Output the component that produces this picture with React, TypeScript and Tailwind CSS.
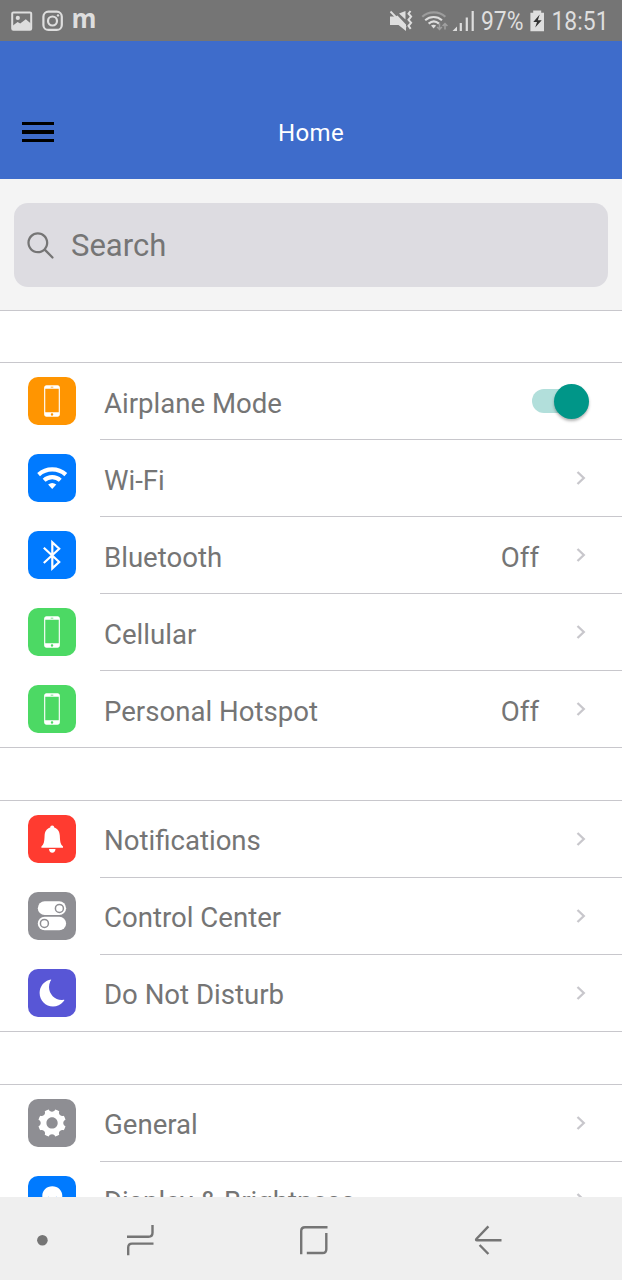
import React from "react";
import {
  IoIosMoon,
  IoIosPhonePortrait,
  IoIosSearch,
  IoIosSettings,
} from "react-icons/io";

type IconProps = { size?: number; className?: string };

type Item = {
  label: string;
  icon: React.ComponentType<IconProps>;
  tile: string;
  value?: string;
  toggle?: boolean;
};

function WifiIcon({ className }: IconProps) {
  return (
    <svg className={className} width="48" height="48" viewBox="0 0 48 48" fill="none" stroke="currentColor">
      <path d="M10.6 20.6a20.500 20.500 0 0 1 27.200 0" strokeWidth="4.200" />
      <path d="M16.100 26.200a12 12 0 0 1 16.200 0" strokeWidth="4.200" />
      <path d="M20.100 30.600q4.100-3 8.200 0L24.200 35z" fill="currentColor" stroke="none" />
    </svg>
  );
}

function BluetoothIcon({ className }: IconProps) {
  return (
    <svg className={className} width="48" height="48" viewBox="0 0 48 48" fill="none" stroke="currentColor" strokeWidth="2.200">
      <path d="M15.800 16.800L31.200 31 24.300 37.400V11.300L31.200 17.800 15.800 32" />
    </svg>
  );
}

function BellIcon({ className }: IconProps) {
  return (
    <svg className={className} width="48" height="48" viewBox="0 0 48 48" fill="currentColor">
      <path d="M24.200 10.400c1.300 0 1.900.8 2 2 3.600 1 5.400 4.200 5.600 8.200.3 6.200.5 8.600 3.200 11v1.200H13.400v-1.200c2.700-2.400 2.900-4.800 3.200-11 .2-4 2-7.200 5.600-8.200.1-1.200.7-2 2-2z" />
      <path d="M21 34.100h6.500c-.1 2.300-1.400 3.700-3.250 3.700S21.100 36.400 21 34.100z" />
    </svg>
  );
}

function SwitchesIcon({ className }: IconProps) {
  return (
    <svg className={className} width="48" height="48" viewBox="0 0 48 48" fill="currentColor">
      <rect x="9.800" y="9.300" width="28.300" height="13.800" rx="6.900" />
      <rect x="9.800" y="24.700" width="28.300" height="13.600" rx="6.800" />
      <circle cx="31.400" cy="16.400" r="4" fill="none" stroke="#8e8e93" strokeWidth="1.500" />
      <circle cx="16.400" cy="31.400" r="4" fill="none" stroke="#8e8e93" strokeWidth="1.500" />
    </svg>
  );
}

function BulbIcon({ className }: IconProps) {
  return (
    <svg className={className} width="48" height="48" viewBox="0 0 48 48" fill="currentColor">
      <path d="M24.300 10.200c-5.700 0-10 4.200-10 9.500 0 5.300 3.400 6.800 4.800 12h10.400c1.400-5.200 4.800-6.700 4.800-12 0-5.300-4.300-9.500-10-9.500zM20 33.500h8.600v4H20z" />
      <path d="M20 20.500l2.200 1.500 2.100-1 2.100 1 2.200-1.500-2.600 10h-3.400z" fill="#007aff" />
    </svg>
  );
}

const groups: Item[][] = [
  [
    { label: "Airplane Mode", icon: IoIosPhonePortrait, tile: "bg-[#ff9501]", toggle: true },
    { label: "Wi-Fi", icon: WifiIcon, tile: "bg-[#007aff]" },
    { label: "Bluetooth", icon: BluetoothIcon, tile: "bg-[#007aff]", value: "Off" },
    { label: "Cellular", icon: IoIosPhonePortrait, tile: "bg-[#4cd964]" },
    { label: "Personal Hotspot", icon: IoIosPhonePortrait, tile: "bg-[#4cd964]", value: "Off" },
  ],
  [
    { label: "Notifications", icon: BellIcon, tile: "bg-[#ff3b30]" },
    { label: "Control Center", icon: SwitchesIcon, tile: "bg-[#8e8e93]" },
    { label: "Do Not Disturb", icon: IoIosMoon, tile: "bg-[#5856d6]" },
  ],
  [
    { label: "General", icon: IoIosSettings, tile: "bg-[#8e8e93]" },
    { label: "Display & Brightness", icon: BulbIcon, tile: "bg-[#007aff]" },
  ],
];

function StatusBar() {
  return (
    <div className="flex h-[41px] shrink-0 items-center bg-[#757575] text-[#dedede]">
      <svg width="100" height="41" viewBox="0 0 100 41" fill="none">
        <rect x="12.2" y="12.4" width="19" height="17.4" rx="1.2" stroke="currentColor" strokeWidth="2" />
        <circle cx="17.8" cy="17.9" r="2.1" fill="currentColor" />
        <path d="M13 25.5l4.6-3.4 2.6 1.5 5.6-4.3 5 4.3v6H13z" fill="currentColor" />
        <rect x="43.4" y="11.7" width="18.4" height="18.2" rx="5" stroke="currentColor" strokeWidth="2.2" />
        <circle cx="52.5" cy="21" r="4.5" stroke="currentColor" strokeWidth="2.2" />
        <circle cx="58" cy="15.4" r="1.2" fill="currentColor" />
        <text x="71.5" y="28.4" fill="currentColor" fontFamily="Open Sans" fontWeight="700" fontSize="27" textLength="25" lengthAdjust="spacingAndGlyphs">m</text>
      </svg>
      <svg className="ml-auto" width="234" height="41" viewBox="388 0 234 41" fill="none">
        <path d="M390 16.5h5.5l2-1 8.5 9v6.5l-7.5-6H390zM399 13.5l6.5-2.5v8.6z" fill="currentColor" />
        <path d="M390.5 11.5l15.5 16" stroke="currentColor" strokeWidth="1.8" />
        <path d="M410.5 11l-2 2.6 2.6 3-2.6 3.2 2.6 3-2.6 3 2.2 3" stroke="currentColor" strokeWidth="2" />
        <path d="M422.3 16.8c6-6 17-6 23 0" stroke="#9c9c9c" strokeWidth="2.2" />
        <path d="M425.2 20.2c5-4.2 11.8-4.2 16.8 0M428.6 23.6c3.3-2.8 7.2-2.8 10.4 0" stroke="currentColor" strokeWidth="2.1" />
        <path d="M431 25.5q2.6-1.6 5.2 0l-2.6 3z" fill="currentColor" />
        <path d="M439.5 23.5v6m-2.4-2.5 2.4 2.5 2.4-2.5M445 29.5v-6m-2.4 2.5 2.4-2.5 2.4 2.5" stroke="#a0a0a0" strokeWidth="1.5" />
        <path d="M452.5 31l4.5-4.5V31z" fill="currentColor" />
        <path d="M460.8 31v-8M466.8 31V17.5M472.7 31V11" stroke="currentColor" strokeWidth="2.2" />
        <text x="481" y="30.2" fill="currentColor" fontFamily="Roboto" fontSize="26" textLength="42.5" lengthAdjust="spacingAndGlyphs">97%</text>
        <path d="M533.2 10.5h8v2.2h2.8v18.6h-13.6V12.7h2.8z" fill="currentColor" />
        <path d="M539.7 14.5l-6.4 7.6h3.7l-1.8 5.5 6.5-7.4h-3.9z" fill="#333333" />
        <text x="551.5" y="30.2" fill="currentColor" fontFamily="Roboto" fontSize="26" textLength="57" lengthAdjust="spacingAndGlyphs">18:51</text>
      </svg>
    </div>
  );
}

function Toggle() {
  return (
    <div className="relative mr-[34px] h-6 w-14 rounded-full">
      <div className="h-6 w-11 rounded-full bg-[#b2dfdb]" />
      <div className="absolute -top-[5px] -right-[0.5px] size-[34.5px] rounded-full bg-[#009688] shadow-[0_2px_3px_rgba(0,0,0,0.3)]" />
    </div>
  );
}

function Row({ item, last, textPad }: { item: Item; last: boolean; textPad: string }) {
  const Icon = item.icon;
  return (
    <div className={`flex h-[77px] pl-[27.6px] ${last ? "shadow-[inset_0_-1px_0_#c8c7cc]" : ""}`}>
      <div className={`mt-[13.8px] flex size-[48.4px] shrink-0 items-center justify-center rounded-[10px] text-white ${item.tile}`}>
        <Icon size={36} className="shrink-0" />
      </div>
      <div className="ml-6 flex grow items-center border-b border-[#c8c7cc] pl-1 text-[27.6px]">
        <span className={`grow whitespace-nowrap ${textPad}`}>{item.label}</span>
        {item.value && <span className={`mr-9 ${textPad}`}>{item.value}</span>}
        {item.toggle ? (
          <Toggle />
        ) : (
          <svg className="mr-[35px] shrink-0" width="12" height="16" viewBox="0 0 12 16" fill="none">
            <path d="M2.500 2L8.800 8l-6.300 6" stroke="#c8c7cc" strokeWidth="2.300" />
          </svg>
        )}
      </div>
    </div>
  );
}

function NavBar() {
  return (
    <div className="flex h-[83px] shrink-0 bg-[#efefef]">
      <svg width="622" height="83" viewBox="0 1197 622 83" fill="none" stroke="#757575" strokeWidth="2.4">
        <circle cx="42.4" cy="1240.2" r="5.3" fill="#757575" stroke="none" />
        <path d="M127 1236.700h21.500q4 0 4-4v-7.700M153.500 1243.600H132q-3.800 0-3.800 4v7.700" />
        <path d="M327.500 1227.200H305q-3.800 0-3.800 3.800v23.300M306.800 1253h15.700q3.800 0 3.800-3.800V1233" />
        <path d="M501.500 1240.300H477q-1.500 0-.6-1.300l12-12.600M479.600 1245l8.800 9" />
      </svg>
    </div>
  );
}

export default function App() {
  return (
    <div className="flex h-[1280px] w-[622px] flex-col overflow-hidden bg-white font-[Roboto,sans-serif] text-[#757575]">
      <StatusBar />
      <header className="grid h-[138px] shrink-0 grid-cols-[1fr_auto_1fr] items-center bg-[#3e6ccb] px-[22px] pt-[44px]">
        <div className="flex flex-col gap-[5px]">
          <div className="h-[3.5px] w-8 bg-black" />
          <div className="h-[3.5px] w-8 bg-black" />
          <div className="h-[3.5px] w-8 bg-black" />
        </div>
        <h1 className="pt-[2px] text-2xl tracking-[0.4px] text-white">Home</h1>
      </header>
      <div className="h-[132px] shrink-0 border-b border-[#c8c7cc] bg-[#f4f4f4] px-3.5 pt-6">
        <div className="flex h-[84px] items-center rounded-[14px] bg-[#dddce1] pl-[9px] text-[31px]">
          <IoIosSearch size={35} />
          <span className="ml-[13px] pt-[2px]">Search</span>
        </div>
      </div>
      <main className="flex min-h-0 grow flex-col gap-[52px] overflow-hidden pt-[51px]">
        {groups.map((group, i) => (
          <section key={i} className="shrink-0 border-t border-[#c8c7cc]">
            {group.map((item, j) => (
              <Row
                key={item.label}
                item={item}
                last={j === group.length - 1}
                textPad={i === 0 ? "pt-[5px]" : "pt-[3px]"}
              />
            ))}
          </section>
        ))}
      </main>
      <NavBar />
    </div>
  );
}
